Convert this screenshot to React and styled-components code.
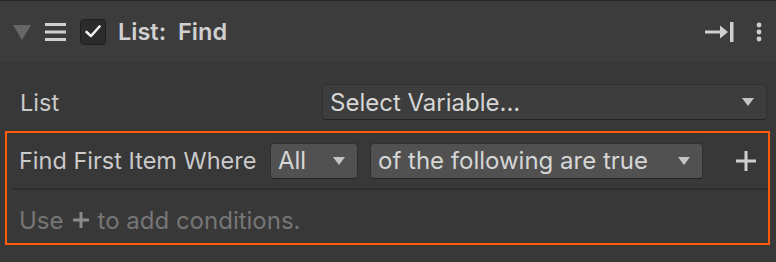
import React from 'react';
import styled, { createGlobalStyle } from 'styled-components';

const GlobalStyle = createGlobalStyle`
  html, body {
    margin: 0;
    padding: 0;
    background: #383838;
  }
  body {
    font-family: Inter, "Noto Sans", sans-serif;
    color: #d2d2d2;
  }
`;

const Panel = styled.div`
  width: 776px;
  height: 262px;
  background: #383838;
  border-top: 1px solid #242424;
  box-sizing: border-box;
`;

const Header = styled.div`
  height: 61px;
  background: #3c3c3c;
  display: flex;
  align-items: center;
  padding: 0 14px 0 12px;
  box-sizing: border-box;
`;

const Title = styled.div`
  font-size: 23.5px;
  font-weight: 600;
  color: #d0d0d0;
  margin-left: 12px;
  word-spacing: 6px;
`;

const Check = styled.div`
  width: 26px;
  height: 26px;
  border-radius: 4px;
  background: #2b2b2b;
  border: 1px solid #1f1f1f;
  box-sizing: border-box;
  display: flex;
  align-items: center;
  justify-content: center;
  margin-left: 14px;
`;

const Spacer = styled.div`
  flex: 1;
`;

const IconBtn = styled.div`
  display: flex;
  align-items: center;
  justify-content: center;
  margin-left: ${(p) => p.gap || 0}px;
`;

const Body = styled.div`
  padding: 22px 6px 0 5px;
`;

const FieldRow = styled.div`
  display: flex;
  align-items: center;
  height: 36px;
  padding-left: 15px;
`;

const Label = styled.div`
  font-size: 23.5px;
  color: ${(p) => p.color || '#cacaca'};
  flex: ${(p) => (p.grow ? '0 0 302px' : 'none')};
  white-space: nowrap;
`;

const Dropdown = styled.div`
  height: 36px;
  width: ${(p) => p.width}px;
  margin-left: ${(p) => p.gap || 0}px;
  box-sizing: border-box;
  border-radius: 4px;
  background: ${(p) => (p.light ? '#515151' : '#3d3d3d')};
  border: 1px solid ${(p) => (p.light ? '#303030' : '#2f2f2f')};
  border-bottom-color: #232323;
  display: flex;
  align-items: center;
  justify-content: space-between;
  padding: 0 12px 0 7px;
  font-size: 24px;
  color: #d6d6d6;
  white-space: nowrap;
`;

const Caret = styled.div`
  width: 0;
  height: 0;
  border-left: 6px solid transparent;
  border-right: 6px solid transparent;
  border-top: 8px solid #c4c4c4;
`;

const Box = styled.div`
  margin-top: 11px;
  border: 2px solid #ff5a0a;
  height: 114px;
  box-sizing: border-box;
`;

const ConditionRow = styled.div`
  display: flex;
  align-items: center;
  height: 57px;
  padding: 0 12px 0 6px;
  margin-left: 6px;
  border-bottom: 2px solid #2e2e2e;
  box-sizing: border-box;
`;

const Hint = styled.div`
  display: flex;
  align-items: center;
  height: 53px;
  padding: 7px 0 0 12px;
  box-sizing: border-box;
  font-size: 24px;
  color: #767676;
  gap: 9px;
`;

const App = () => (
  <>
    <GlobalStyle />
    <Panel>
      <Header>
        <svg width="20" height="16" viewBox="0 0 20 16">
          <polygon points="1,1 19,1 10,16" fill="#676767" />
        </svg>
        <IconBtn gap={13}>
          <svg width="21" height="18" viewBox="0 0 21 18">
            <rect x="0" y="0" width="21" height="3" fill="#cfcfcf" />
            <rect x="0" y="7.5" width="21" height="3" fill="#cfcfcf" />
            <rect x="0" y="15" width="21" height="3" fill="#cfcfcf" />
          </svg>
        </IconBtn>
        <Check>
          <svg width="16" height="13" viewBox="0 0 16 13">
            <polyline points="1.5,7 6,11 14.5,1.5" fill="none" stroke="#f0f0f0" strokeWidth="2.6" strokeLinecap="round" strokeLinejoin="round" />
          </svg>
        </Check>
        <Title>List: Find</Title>
        <Spacer />
        <IconBtn>
          <svg width="29" height="20" viewBox="0 0 29 20">
            <rect x="0" y="8.5" width="17" height="3" fill="#cfcfcf" />
            <polygon points="15,3.5 23,10 15,16.5" fill="#cfcfcf" />
            <rect x="25" y="0" width="3.5" height="20" fill="#cfcfcf" />
          </svg>
        </IconBtn>
        <IconBtn gap={22}>
          <svg width="6" height="20" viewBox="0 0 6 20">
            <circle cx="3" cy="3" r="2.4" fill="#cfcfcf" />
            <circle cx="3" cy="10" r="2.4" fill="#cfcfcf" />
            <circle cx="3" cy="17" r="2.4" fill="#cfcfcf" />
          </svg>
        </IconBtn>
      </Header>
      <Body>
        <FieldRow>
          <Label grow>List</Label>
          <Dropdown width={445}>
            <span>Select Variable...</span>
            <Caret />
          </Dropdown>
        </FieldRow>
        <Box>
          <ConditionRow>
            <Label>Find First Item Where</Label>
            <Spacer />
            <Dropdown light width={88}>
              <span>All</span>
              <Caret />
            </Dropdown>
            <Dropdown light width={333} gap={12}>
              <span>of the following are true</span>
              <Caret />
            </Dropdown>
            <IconBtn gap={33}>
              <svg width="20" height="20" viewBox="0 0 20 20">
                <rect x="8.5" y="0" width="3" height="20" fill="#cfcfcf" />
                <rect x="0" y="8.5" width="20" height="3" fill="#cfcfcf" />
              </svg>
            </IconBtn>
          </ConditionRow>
          <Hint>
            <span>Use</span>
            <svg width="16" height="16" viewBox="0 0 16 16">
              <rect x="6.5" y="0" width="3" height="16" fill="#8a8a8a" />
              <rect x="0" y="6.5" width="16" height="3" fill="#8a8a8a" />
            </svg>
            <span>to add conditions.</span>
          </Hint>
        </Box>
      </Body>
    </Panel>
  </>
);

export default App;
